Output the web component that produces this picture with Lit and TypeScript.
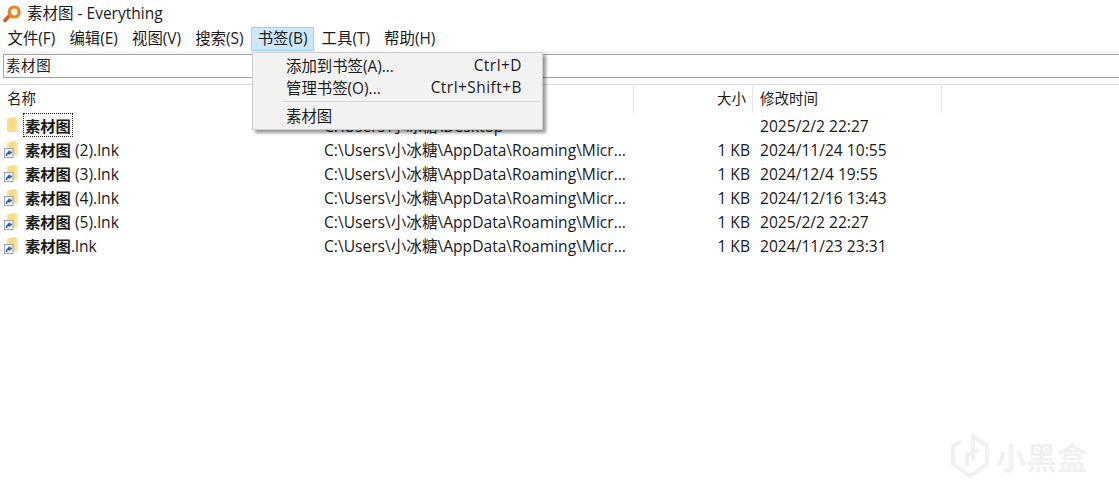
import { LitElement, html, css, svg } from "lit";
import { customElement } from "lit/decorators.js";

const P = "C:\\Users\\小冰糖\\AppData\\Roaming\\Micr...";
const rows = [
  { bold: "素材图", rest: "", path: "C:\\Users\\小冰糖\\Desktop", size: "", date: "2025/2/2 22:27", folder: true },
  { bold: "素材图", rest: " (2).lnk", path: P, size: "1 KB", date: "2024/11/24 10:55", folder: false },
  { bold: "素材图", rest: " (3).lnk", path: P, size: "1 KB", date: "2024/12/4 19:55", folder: false },
  { bold: "素材图", rest: " (4).lnk", path: P, size: "1 KB", date: "2024/12/16 13:43", folder: false },
  { bold: "素材图", rest: " (5).lnk", path: P, size: "1 KB", date: "2025/2/2 22:27", folder: false },
  { bold: "素材图", rest: ".lnk", path: P, size: "1 KB", date: "2024/11/23 23:31", folder: false },
];
const menus = ["文件(F)", "编辑(E)", "视图(V)", "搜索(S)", "书签(B)", "工具(T)", "帮助(H)"];

const fileIcon = (link: boolean) => html`<svg class="ficon" width="20" height="20" viewBox="0 0 20 20">
  <defs><linearGradient id="fg" x1="0" y1="0" x2="1" y2="0">
    <stop offset="0" stop-color="#fbe08c"/><stop offset="0.55" stop-color="#fcd874"/><stop offset="1" stop-color="#f8ebc4"/>
  </linearGradient></defs>
  <path d="M6 3.5 L14 2 L15.5 3 L17 3.5 L17 17 L8 17 L6 16 Z" fill="url(#fg)"/>
  ${link ? svg`<rect x="3.5" y="9.5" width="8.5" height="9" fill="#f4f6fa" stroke="#9aa3b5" stroke-width="1"/>
  <path d="M5.5 17 C5.5 14.5 7 13.5 9 13.5 M7.5 11.8 L10 13.5 L7.5 15.5" fill="none" stroke="#2a62b8" stroke-width="1.6"/>` : ""}
</svg>`;

@customElement("app-root")
export class AppRoot extends LitElement {
  static styles = css`
    :host {
      display: block;
      position: relative;
      width: 1119px;
      height: 492px;
      overflow: hidden;
      background: #fff;
      color: #1a1a1a;
      font-family: "Open Sans", "Noto Sans CJK SC", sans-serif;
      font-size: 14.5px;
    }
    .title {
      height: 27px;
      display: flex;
      align-items: center;
      gap: 6px;
      padding-left: 3px;
      box-sizing: border-box;
      font-size: 15.5px;
    }
    .title span { margin-bottom: 2px; }
    .menubar {
      height: 24px;
      display: flex;
      font-size: 15.4px;
      white-space: nowrap;
      padding-left: 0.5px;
      gap: 0.15px;
    }
    .mi {
      padding: 0 6px 3px;
      display: flex;
      align-items: center;
      border: 1px solid transparent;
      box-sizing: border-box;
    }
    .mi.on {
      background: #cce8ff;
      border-color: #99d1ff;
    }
    .strip {
      height: 3px;
      background: #f5f5f5;
    }
    .search {
      height: 24px;
      margin-left: 3px;
      border: 1px solid #a3a3a3;
      border-right: none;
      box-sizing: border-box;
      display: flex;
      align-items: center;
      padding: 0 0 3px 2px;
      letter-spacing: 0.6px;
    }
    .head {
      margin-top: 6px;
      height: 29px;
      border-top: 1px solid #dcdcdc;
      box-sizing: border-box;
      display: grid;
      grid-template-columns: 634px 119px 189px;
      align-items: stretch;
    }
    .hc {
      display: flex;
      align-items: center;
      border-right: 1px solid #e6e6e6;
      box-sizing: border-box;
      padding: 0 0 3px 7px;
    }
    .hc.size { justify-content: flex-end; padding-right: 6px; }
    .list {
      display: flex;
      flex-direction: column;
      font-size: 15.6px;
    }
    .row {
      height: 24px;
      display: grid;
      grid-template-columns: 324px 309px 120px 1fr;
      align-items: center;
      white-space: nowrap;
    }
    .cell { padding-top: 1px; }
    .nm {
      display: flex;
      align-items: center;
    }
    .ficon { flex: none; margin-left: 1px; margin-right: 2px; }
    .label {
      padding: 0 1px;
      border: 1px dotted transparent;
      box-sizing: border-box;
      height: 24px;
      line-height: 24px;
      display: block;
    }
    .label.focus { border-color: #222; }
    .label b { font-weight: 700; font-size: 15.3px; }
    .sz { text-align: right; padding-right: 3px; }
    .dt { padding-left: 7px; }
    .menu {
      position: absolute;
      left: 252px;
      top: 52px;
      width: 291px;
      height: 78px;
      box-sizing: border-box;
      background: #f2f2f2;
      border: 1px solid #cccccc;
      box-shadow: 3px 3px 3px rgba(0, 0, 0, 0.4);
      font-size: 15.4px;
      padding-top: 1px;
    }
    .it {
      height: 22px;
      display: flex;
      justify-content: space-between;
      align-items: center;
      padding: 0 20px 0 33px;
      white-space: nowrap;
    }
    .key { letter-spacing: 0.5px; }
    .sep {
      height: 1px;
      background: #d7d7d7;
      margin: 3px 2px 2px 29px;
    }
    .mark {
      position: absolute;
      left: 950px;
      top: 433px;
      display: flex;
      align-items: center;
      gap: 6px;
      color: #f1f1f1;
      font-size: 30px;
      font-weight: 700;
      letter-spacing: 0.5px;
    }
  `;

  render() {
    return html`
      <div class="title">
        <svg width="18" height="20" viewBox="0 0 18 20">
          <path d="M6.5 11.5 L2 16.5" stroke="#c8641a" stroke-width="3.6" stroke-linecap="round"/>
          <circle cx="11.2" cy="8" r="5" fill="#fff6e8" stroke="#e8842a" stroke-width="3.2"/>
        </svg>
        <span>素材图 - Everything</span>
      </div>
      <div class="menubar">
        ${menus.map((m) => html`<div class="mi ${m.startsWith("书签") ? "on" : ""}">${m}</div>`)}
      </div>
      <div class="strip"></div>
      <div class="search">素材图</div>
      <div class="head">
        <div class="hc">名称</div>
        <div class="hc size">大小</div>
        <div class="hc">修改时间</div>
      </div>
      <div class="list">
        ${rows.map(
          (r) => html`<div class="row">
            <div class="nm">
              ${fileIcon(!r.folder)}
              <span class="label ${r.folder ? "focus" : ""}"><b>${r.bold}</b>${r.rest}</span>
            </div>
            <div class="cell">${r.path}</div>
            <div class="cell sz">${r.size}</div>
            <div class="cell dt">${r.date}</div>
          </div>`
        )}
      </div>
      <div class="menu">
        <div class="it"><span>添加到书签(A)...</span><span class="key">Ctrl+D</span></div>
        <div class="it"><span>管理书签(O)...</span><span class="key">Ctrl+Shift+B</span></div>
        <div class="sep"></div>
        <div class="it"><span>素材图</span></div>
      </div>
      <div class="mark">
        <svg width="40" height="46" viewBox="0 0 40 46" fill="none" stroke="#f1f1f1" stroke-width="4">
          <path d="M11 8 L3 13 L3 31 L20 43 L37 31 L37 13 L23 3 L23 28 M17 20 L17 34 M17 22 L29 17"/>
        </svg>
        <span>小黑盒</span>
      </div>
    `;
  }
}
